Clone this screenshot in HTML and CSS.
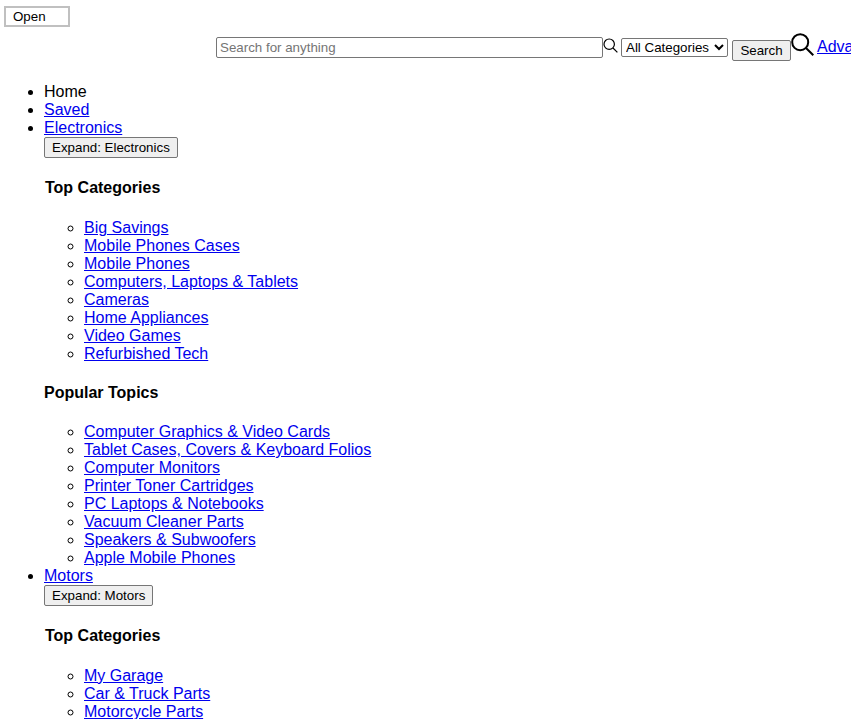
FILE: index.html
```html
<!DOCTYPE html>
<html lang="en">
<head>
  <meta charset="UTF-8" />
  <title>Electronics, Cars, Fashion, Collectibles &amp; More</title>
  <link rel="stylesheet" href="styles.css">
</head>
<body>
  <button class="open-btn" type="button">Open</button>

  <form class="search-form">
    <input class="search-input" type="text" placeholder="Search for anything">
    <svg class="icon-small" viewBox="0 0 15 15" aria-hidden="true">
      <circle cx="6.2" cy="6.2" r="5.2" />
      <path d="M10 10l4.4 4.4" />
    </svg>
    <select class="search-select">
      <option>All Categories</option>
    </select>
    <button class="search-btn" type="button">Search</button>
    <svg class="icon-large" viewBox="0 0 24 24" aria-hidden="true">
      <circle cx="9.2" cy="9.2" r="8" />
      <path d="M15 15l7.3 7.3" />
    </svg>
    <a class="advanced-link" href="#">Advanced</a>
  </form>

  <ul class="nav">
    <li>Home</li>
    <li><a href="#">Saved</a></li>
    <li>
      <a href="#">Electronics</a><br>
      <button class="expand-btn" type="button">Expand: Electronics</button>
      <h3 class="group-title first">Top Categories</h3>
      <ul class="sub-list">
        <li><a href="#">Big Savings</a></li>
        <li><a href="#">Mobile Phones Cases</a></li>
        <li><a href="#">Mobile Phones</a></li>
        <li><a href="#">Computers, Laptops &amp; Tablets</a></li>
        <li><a href="#">Cameras</a></li>
        <li><a href="#">Home Appliances</a></li>
        <li><a href="#">Video Games</a></li>
        <li><a href="#">Refurbished Tech</a></li>
      </ul>
      <h3 class="group-title">Popular Topics</h3>
      <ul class="sub-list">
        <li><a href="#">Computer Graphics &amp; Video Cards</a></li>
        <li><a href="#">Tablet Cases, Covers &amp; Keyboard Folios</a></li>
        <li><a href="#">Computer Monitors</a></li>
        <li><a href="#">Printer Toner Cartridges</a></li>
        <li><a href="#">PC Laptops &amp; Notebooks</a></li>
        <li><a href="#">Vacuum Cleaner Parts</a></li>
        <li><a href="#">Speakers &amp; Subwoofers</a></li>
        <li><a href="#">Apple Mobile Phones</a></li>
      </ul>
    </li>
    <li>
      <a href="#">Motors</a><br>
      <button class="expand-btn" type="button">Expand: Motors</button>
      <h3 class="group-title first">Top Categories</h3>
      <ul class="sub-list">
        <li><a href="#">My Garage</a></li>
        <li><a href="#">Car &amp; Truck Parts</a></li>
        <li><a href="#">Motorcycle Parts</a></li>
      </ul>
    </li>
  </ul>
</body>
</html>
```

FILE: styles.css
```css
html, body {
  height: 719px;
  overflow: hidden;
}

body {
  margin: 0;
  font-family: "Liberation Sans", Arial, sans-serif;
  font-size: 16px;
  line-height: 18px;
  color: #000;
  background-color: #fff;
}

a {
  color: #0000ee;
}

button, select, input {
  font-family: "Liberation Sans", Arial, sans-serif;
  font-size: 13.33px;
  line-height: 15px;
  box-sizing: border-box;
}

.open-btn {
  display: block;
  width: 66px;
  height: 21px;
  margin: 6px 0 0 4px;
  padding: 0 0 0 7px;
  text-align: left;
  color: #000;
  background-color: #fff;
  border: 2px solid #c0c0c0;
}

.search-form {
  display: flex;
  align-items: flex-start;
  width: 1000px;
  height: 49px;
  padding-left: 216px;
  padding-top: 6px;
  box-sizing: border-box;
}

.search-input {
  width: 387px;
  height: 21px;
  margin-top: 4px;
  padding: 1px 3px;
  border: 1px solid #767676;
  border-radius: 2px;
  background-color: #fff;
}

.search-input::placeholder {
  color: #757575;
}

.icon-small {
  width: 15px;
  height: 15px;
  margin-top: 5px;
  flex: none;
  fill: none;
  stroke: #000;
  stroke-width: 1.2;
}

.search-select {
  width: 107px;
  height: 19px;
  margin: 5px 0 0 3px;
  padding: 0;
  border: 1px solid #767676;
  border-radius: 2px;
  background-color: #fff;
  color: #000;
}

.search-btn {
  width: 59px;
  height: 21px;
  margin: 7px 0 0 4px;
  padding: 1px 6px;
  color: #000;
  background-color: #efefef;
  border: 1px solid #767676;
  border-radius: 2px;
}

.icon-large {
  width: 24px;
  height: 24px;
  flex: none;
  fill: none;
  stroke: #000;
  stroke-width: 2;
}

.advanced-link {
  margin: 5px 0 0 2px;
}

.nav {
  margin: 7px 0 0;
  padding-left: 44px;
}

.expand-btn {
  display: block;
  height: 21px;
  padding: 1px 7px;
  color: #000;
  background-color: #efefef;
  border: 1px solid #767676;
  border-radius: 2px;
}

.group-title {
  margin: 21px 0;
  font-size: 16px;
  line-height: 18px;
  font-weight: bold;
}

.group-title.first {
  margin-bottom: 22px;
  padding-left: 1px;
}

.sub-list {
  margin: 0;
  padding-left: 40px;
}
```
